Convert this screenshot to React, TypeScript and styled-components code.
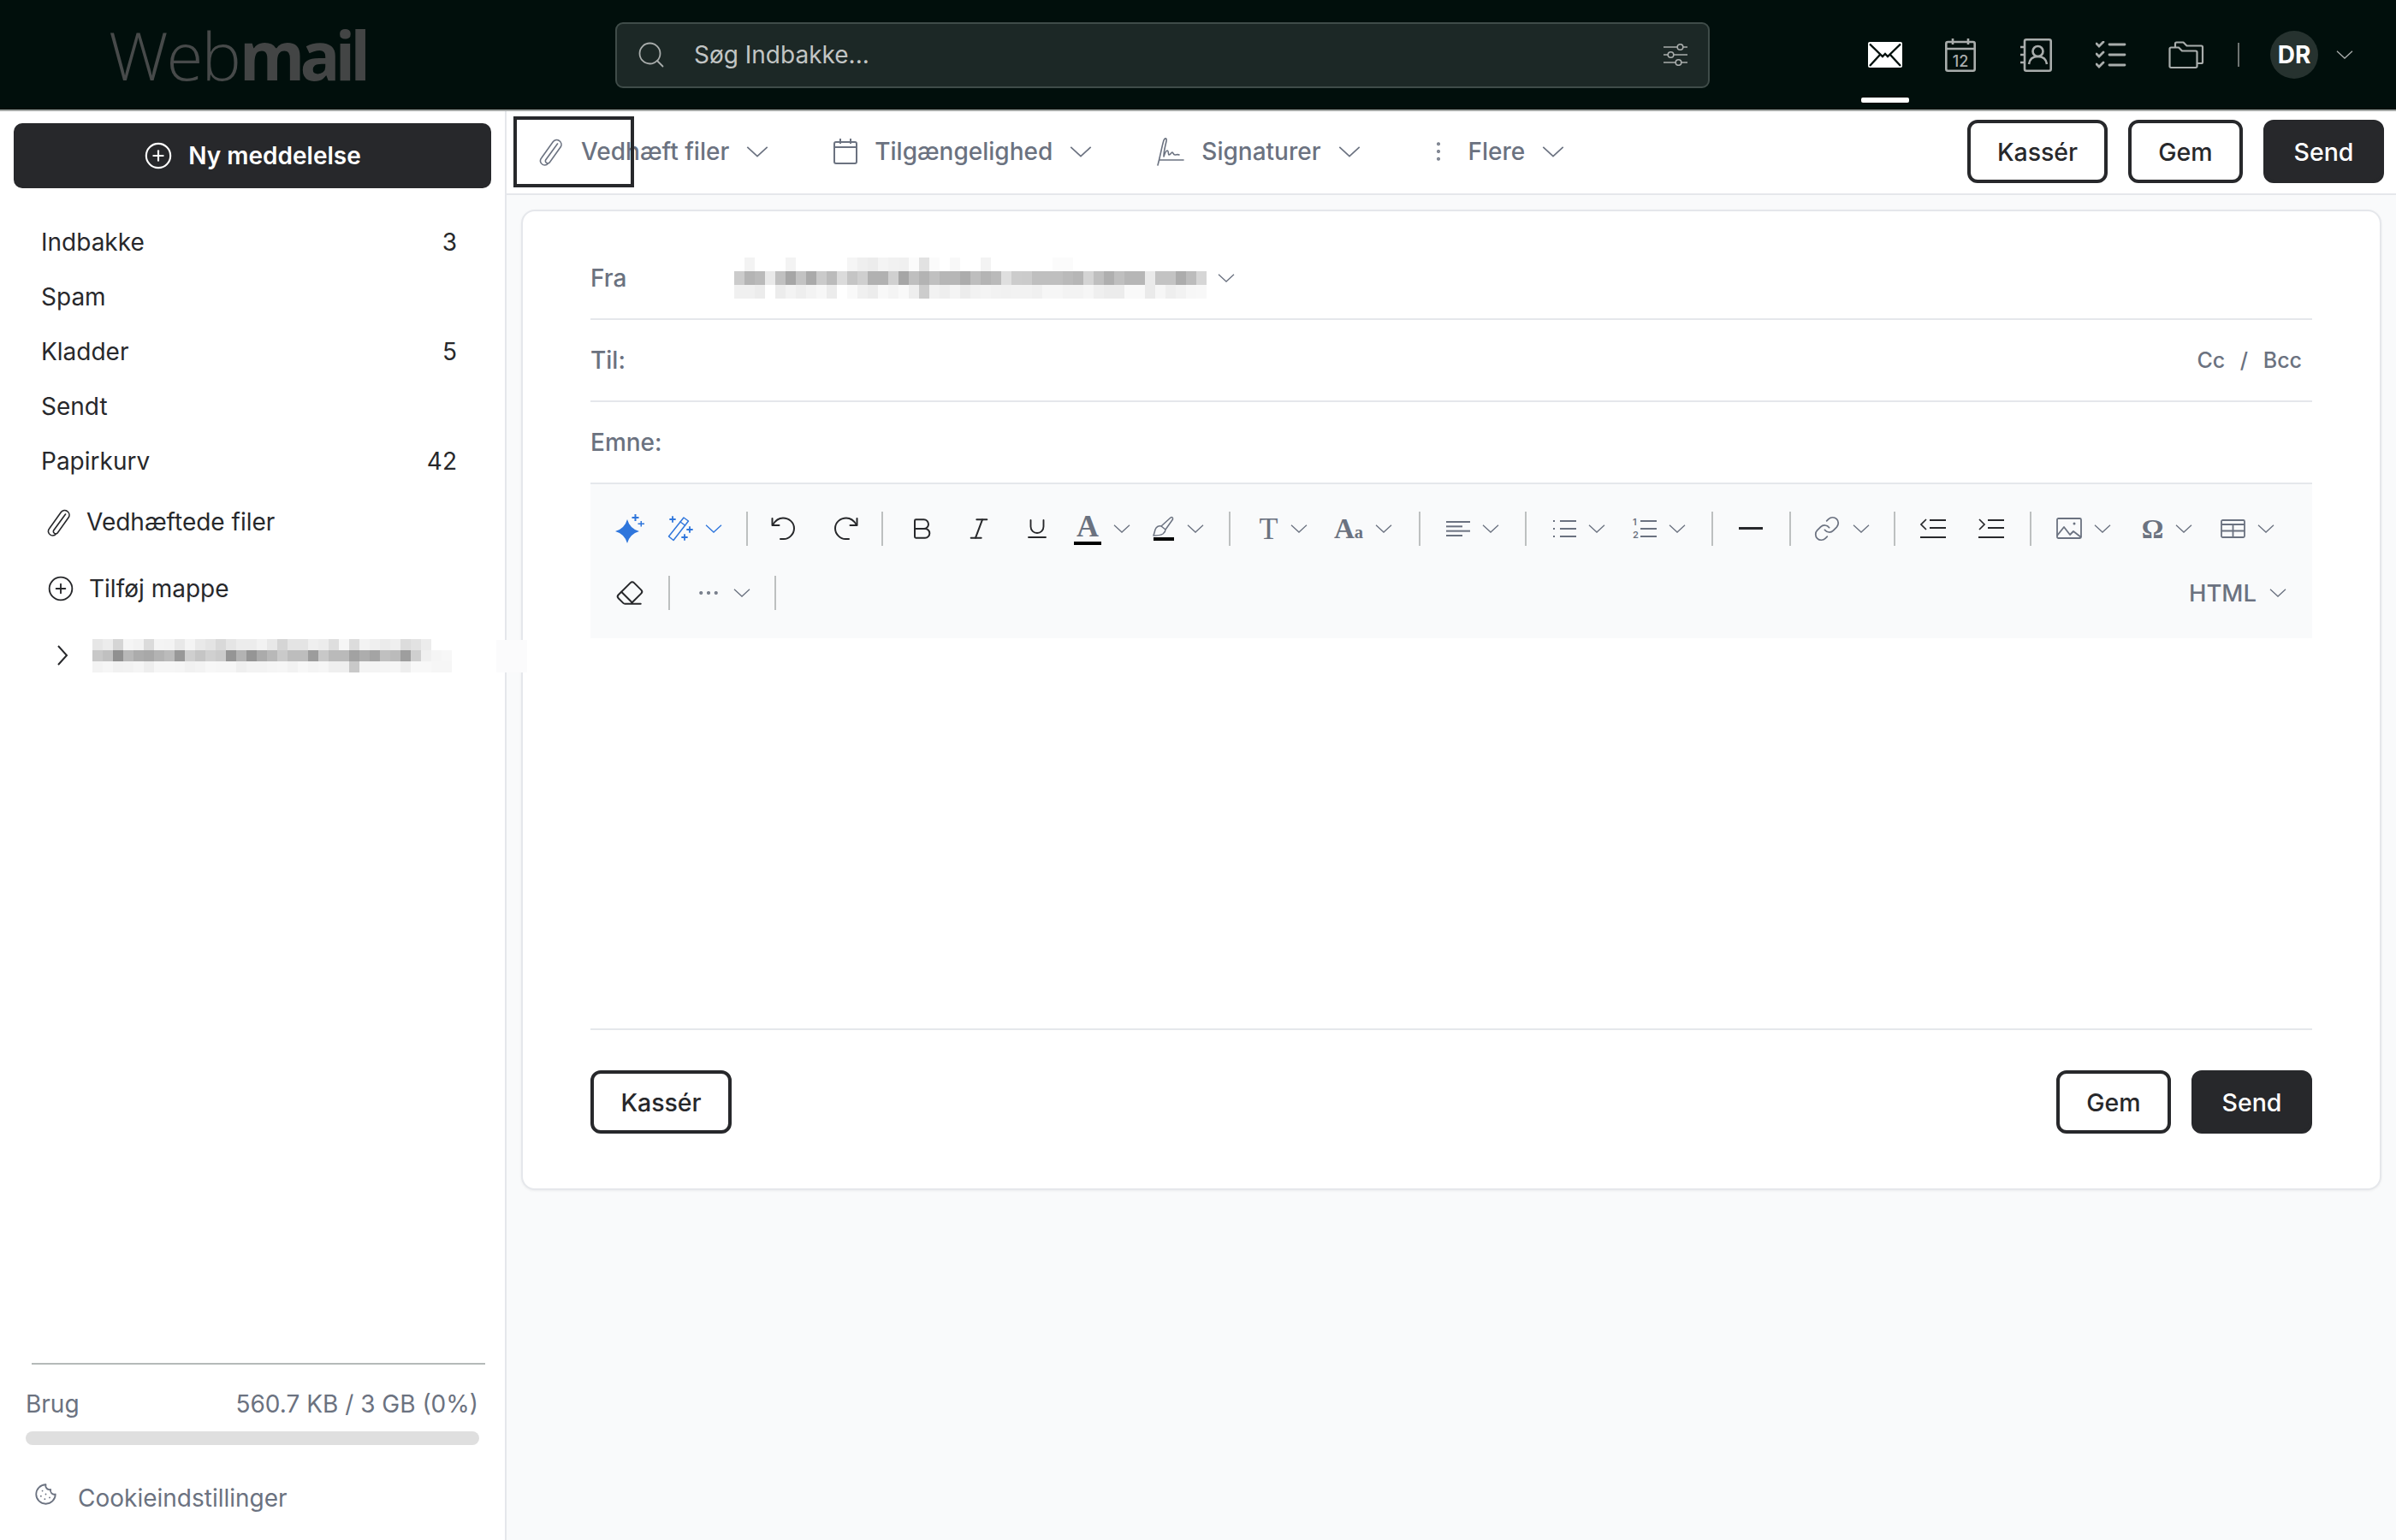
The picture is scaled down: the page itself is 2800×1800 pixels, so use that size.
import React from "react"
import styled, { createGlobalStyle } from "styled-components"
import {
  Bold,
  CirclePlus,
  Cookie,
  Ellipsis,
  EllipsisVertical,
  Eraser,
  Italic,
  Link,
  Search,
  Underline,
} from "lucide-react"

const DARK = "#27282b"
const GRAY = "#6b7280"
const LINE = "#e5e7eb"

const GlobalStyle = createGlobalStyle`
  html, body {
    margin: 0;
    padding: 0;
    background: #f9fafb;
  }
  body {
    font-family: Inter, "Liberation Sans", sans-serif;
    font-size: 28px;
    color: ${DARK};
  }
  * {
    box-sizing: border-box;
  }
`

const Page = styled.div`
  width: 2800px;
  height: 1800px;
  position: relative;
  overflow: hidden;
  display: flex;
  flex-direction: column;
`

/* top bar */
const Header = styled.header`
  height: 130px;
  flex: none;
  display: flex;
  align-items: center;
  padding: 0 50px 0 127px;
  background: #010f0c;
  border-bottom: 2px solid #a5a9a7;
`
const Logo = styled.div`
  width: 592px;
  flex: none;
  font-family: "Open Sans", sans-serif;
  font-size: 78px;
  font-weight: 300;
  letter-spacing: -2px;
  color: #474a4a;
  b {
    font-weight: 700;
    letter-spacing: -6px;
    color: #434545;
  }
`
const SearchBox = styled.div`
  width: 1279px;
  height: 77px;
  flex: none;
  display: flex;
  align-items: center;
  padding: 0 24px 0 22px;
  background: #1c2826;
  border: 2px solid #3f4c49;
  border-radius: 9px;
  color: #a9adac;
`
const SearchText = styled.span`
  flex: 1;
  margin-left: 32px;
  color: #c2c5c4;
`
const Nav = styled.nav`
  margin-left: auto;
  display: flex;
  align-items: center;
  color: #a9adac;
`
const NavItem = styled.div<{ $active?: boolean }>`
  width: 88px;
  height: 128px;
  position: relative;
  display: flex;
  align-items: center;
  justify-content: center;
  color: ${(p) => (p.$active ? "#fff" : "inherit")};
  &::after {
    content: "";
    display: ${(p) => (p.$active ? "block" : "none")};
    position: absolute;
    left: 16px;
    right: 16px;
    top: 114px;
    height: 6px;
    border-radius: 2px;
    background: #fff;
  }
`
const NavDivider = styled.div`
  width: 2px;
  height: 28px;
  margin: 0 36px 0 16px;
  background: #6e7472;
`
const Avatar = styled.div`
  width: 56px;
  height: 56px;
  border-radius: 50%;
  margin-right: 21px;
  display: flex;
  align-items: center;
  justify-content: center;
  background: #26322f;
  color: #fff;
  font-weight: 700;
  font-size: 28px;
`

const Body = styled.div`
  flex: 1;
  display: flex;
  min-height: 0;
`

/* left column */
const Sidebar = styled.aside`
  width: 592px;
  flex: none;
  display: flex;
  flex-direction: column;
  background: #fff;
  border-right: 2px solid ${LINE};
`
const NewMessage = styled.button`
  margin: 14px 16px 31px 16px;
  height: 76px;
  flex: none;
  display: flex;
  align-items: center;
  justify-content: center;
  gap: 18px;
  border: 0;
  border-radius: 10px;
  background: ${DARK};
  color: #fff;
  font: 600 28px Inter, sans-serif;
`
const FolderRow = styled.div`
  height: 64px;
  display: flex;
  align-items: center;
  justify-content: space-between;
  padding: 0 56px 0 48px;
`
const ActionRow = styled.div`
  height: 78px;
  display: flex;
  align-items: center;
  gap: 17px;
  padding-left: 55px;
`
const FolderToggle = styled.svg`
  margin: 0 11px 0 11px;
`
const SidebarFoot = styled.div`
  margin-top: auto;
  height: 207px;
  flex: none;
  color: ${GRAY};
`
const FootLine = styled.div`
  height: 2px;
  margin: 0 23px 0 37px;
  background: #b5bab9;
`
const UsageRow = styled.div`
  margin: 28px 31px 14px 30px;
  height: 36px;
  display: flex;
  align-items: center;
  justify-content: space-between;
`
const UsageBar = styled.div`
  height: 16px;
  margin: 0 30px;
  border-radius: 8px;
  background: #dfdfdf;
`
const CookieRow = styled.div`
  margin-top: 42px;
  height: 40px;
  display: flex;
  align-items: center;
  gap: 24px;
  padding-left: 40px;
  svg {
    position: relative;
    top: -5px;
  }
`

/* right column */
const Main = styled.main`
  flex: 1;
  min-width: 0;
  display: flex;
  flex-direction: column;
`
const ActionBar = styled.div`
  height: 98px;
  flex: none;
  display: flex;
  align-items: center;
  padding: 0 14px 2px 0;
  background: #fff;
  border-bottom: 2px solid ${LINE};
`
const ActionItem = styled.div`
  display: flex;
  align-items: center;
  gap: 20px;
  padding: 0 38px;
  color: ${GRAY};
  font-weight: 500;
`
const ActionButtons = styled.div`
  margin-left: auto;
  display: flex;
  gap: 24px;
`
const Btn = styled.button<{ $primary?: boolean; $w: number }>`
  width: ${(p) => p.$w}px;
  height: 74px;
  border-radius: 12px;
  border: 4px solid ${DARK};
  background: ${(p) => (p.$primary ? DARK : "#fff")};
  color: ${(p) => (p.$primary ? "#fff" : DARK)};
  font: 500 28.5px Inter, sans-serif;
  padding: 0;
`
const FocusRing = styled.div`
  position: absolute;
  left: 600px;
  top: 136px;
  width: 141px;
  height: 83px;
  border: 4px solid ${DARK};
  pointer-events: none;
`
const Content = styled.div`
  flex: 1;
  padding: 17px 17px 0;
  background: #f9fafb;
`
const Card = styled.section`
  height: 1146px;
  display: flex;
  flex-direction: column;
  padding: 31px 79px 0;
  background: #fff;
  border: 2px solid ${LINE};
  border-radius: 16px;
  box-shadow: 0 1px 3px rgba(0, 0, 0, 0.06);
`
const FieldRow = styled.div`
  height: 96px;
  flex: none;
  display: flex;
  align-items: center;
  border-bottom: 2px solid ${LINE};
  color: ${GRAY};
  font-weight: 500;
`
const FromLabel = styled.span`
  width: 168px;
  flex: none;
`
const FromValue = styled.div`
  display: flex;
  align-items: center;
  gap: 13px;
`
const CopyLinks = styled.span`
  margin-left: auto;
  margin-right: 12px;
  font-size: 25px;
  word-spacing: 11px;
`

/* editor toolbar */
const EditorBar = styled.div`
  flex: none;
  padding: 14px 0 16px;
  background: #f9fafb;
`
const EditorRow = styled.div`
  height: 75px;
  display: flex;
  align-items: center;
`
const ToolGroup = styled.div<{ $l: number; $r: number }>`
  display: flex;
  align-items: center;
  padding: 0 ${(p) => p.$r}px 0 ${(p) => p.$l}px;
`
const Divider = styled.div`
  width: 2px;
  height: 40px;
  flex: none;
  background: #bdc0c0;
`
const Tool = styled.div<{ $w: number; $color?: string }>`
  width: ${(p) => p.$w}px;
  display: flex;
  align-items: center;
  justify-content: center;
  gap: 14px;
  color: ${(p) => p.$color || GRAY};
`
const Glyph = styled.span<{ $size: number; $bold?: boolean }>`
  font-family: "Liberation Serif", serif;
  font-size: ${(p) => p.$size}px;
  font-weight: ${(p) => (p.$bold ? 700 : 400)};
  line-height: 34px;
  height: 34px;
  small {
    font-size: 0.62em;
  }
`
const ColorMark = styled.span`
  display: flex;
  flex-direction: column;
  align-items: center;
`
const ColorBar = styled.i<{ $w: number }>`
  display: block;
  width: ${(p) => p.$w}px;
  height: 4px;
  margin-top: 1px;
  background: #000;
`
const RuleIcon = styled.i`
  display: block;
  width: 28px;
  height: 3px;
  background: ${DARK};
`
const HtmlSwitch = styled.div`
  margin-left: auto;
  margin-right: 30px;
  display: flex;
  align-items: center;
  gap: 15px;
  color: ${GRAY};
  font-size: 27.5px;
  font-weight: 500;
`
const EditorArea = styled.div`
  flex: none;
  height: 458px;
  border-bottom: 2px solid ${LINE};
`
const CardFoot = styled.div`
  flex: none;
  display: flex;
  gap: 24px;
  margin-top: 47px;
`
const Spacer = styled.div`
  flex: 1;
`
const Smudge = styled.div`
  position: absolute;
  left: 580px;
  top: 748px;
  width: 36px;
  height: 38px;
  background: #fbfbfc;
`
const ClipSvg = styled.svg`
  margin: 0 -2px 0 -4px;
  flex: none;
`

const Chevron = ({ w = 20, h = 10 }: { w?: number; h?: number }) => (
  <svg width={w} height={h} viewBox="0 0 20 10" fill="none" stroke="currentColor" strokeWidth="1.3">
    <path d="M1 .7l9 8.300 9-8.300" />
  </svg>
)

const Mosaic = ({ rows, cw, ch }: { rows: string[]; cw: number; ch: number }) => {
  const cols = Math.max(...rows.map((r) => r.split(" ").length))
  return (
    <svg width={cols * cw} height={rows.length * ch} viewBox={`0 0 ${cols * cw} ${rows.length * ch}`} shapeRendering="crispEdges">
      {rows.map((r, y) =>
        r.split(" ").map((g, x) => (
          <rect key={`${x}-${y}`} x={x * cw} y={y * ch} width={cw} height={ch} fill={`#${g}${g}${g}`} />
        ))
      )}
    </svg>
  )
}

const Clip = () => (
  <ClipSvg width="35" height="35" viewBox="0 0 24 24" fill="none" stroke="currentColor" strokeWidth="1.100" strokeLinecap="round">
    <path d="M17.500 5.500L8 18.500a1.900 1.900 0 0 0 3 2.200l9-12.600a3.700 3.700 0 0 0-6-4.300L4.600 17a3.300 3.300 0 0 0 1 5.200 3.600 3.600 0 0 0 4.400-1" />
  </ClipSvg>
)
const SliderIcon = () => (
  <svg width="28" height="26" viewBox="0 0 28 26" fill="none" stroke="currentColor" strokeWidth="1.600">
    <path d="M0 4h16M23 4h5M0 13h5M12 13h16M0 22h14M21 22h7" />
    <circle cx="19.500" cy="4" r="3.300" />
    <circle cx="8.500" cy="13" r="3.300" />
    <circle cx="17.500" cy="22" r="3.300" />
  </svg>
)
const CalendarPlain = () => (
  <svg width="28" height="30" viewBox="0 0 28 30" fill="none" stroke="currentColor" strokeWidth="2">
    <rect x="1" y="4" width="26" height="25" rx="2" />
    <path d="M1 10h26M8 0v6M20 0v6" />
  </svg>
)
const SignatureIcon = () => (
  <svg width="32" height="34" viewBox="0 0 32 34" fill="none" stroke="currentColor" strokeWidth="1.600" strokeLinecap="round" strokeLinejoin="round">
    <path d="M1 33C4 22 6 10 8 4c1-3 4-3 3 1-1 5-3 11-3 18 1-3 3-7 4-7 2 0 1 5 2 5 2 0 3-3 4-3s1 3 3 3 3-1 5 0" />
    <path d="M3 27h28" />
  </svg>
)
const MailNav = () => (
  <svg width="40" height="30" viewBox="0 0 40 30">
    <rect width="40" height="30" rx="2" fill="#fff" />
    <path d="M2 2.500L17 17l3-3 3 3L38 2.500M2 28l12-13M38 28L26 15" fill="none" stroke="#010f0c" strokeWidth="2.400" />
  </svg>
)
const CalendarNav = () => (
  <svg width="36" height="39" viewBox="0 0 36 39" fill="none" stroke="currentColor" strokeWidth="2.600">
    <rect x="1.300" y="4" width="33.400" height="33.700" rx="2" />
    <path d="M1 12h34M9 0v7M27 0v7" />
    <text x="18" y="33" textAnchor="middle" fontFamily="Inter, sans-serif" fontSize="18" fontWeight="500" fill="currentColor" stroke="none">12</text>
  </svg>
)
const ContactNav = () => (
  <svg width="37" height="39" viewBox="0 0 37 39" fill="none" stroke="currentColor" strokeWidth="2.600">
    <rect x="5" y="1.300" width="30.700" height="36.400" rx="2" />
    <circle cx="20.500" cy="15" r="6" />
    <path d="M10 30c1-7 6-9 10.500-9S30 23 31 30M0 10h5M0 19h5M0 28h5" />
  </svg>
)
const ChecksNav = () => (
  <svg width="36" height="32" viewBox="0 0 36 32" fill="none" stroke="currentColor" strokeWidth="2.800" strokeLinecap="round">
    <path d="M1 3l3 3 5-5M1 15l3 3 5-5M1 27l3 3 5-5M16 4h18M16 16h18M16 28h18" />
  </svg>
)
const FoldersNav = () => (
  <svg width="42" height="33" viewBox="0 0 42 33" fill="none" stroke="currentColor" strokeWidth="2.200" strokeLinejoin="round">
    <path d="M1.500 9A1.500 1.500 0 0 1 3 7.500h9l4 4h16a1.500 1.500 0 0 1 1.500 1.500v16.500A1.500 1.500 0 0 1 32 31H3a1.500 1.500 0 0 1-1.500-1.500z" />
    <path d="M8 7V3a1.500 1.500 0 0 1 1.500-1.500h8l4 4h17A1.500 1.500 0 0 1 40 7v17.500a1.500 1.500 0 0 1-1.500 1.500H34" />
  </svg>
)
const Sparkle = () => (
  <svg width="34" height="34" viewBox="0 0 34 34" fill="currentColor">
    <path d="M14 6Q17 17 28 20 17 23 14 34 11 23 0 20 11 17 14 6z" />
    <path d="M22.500 0h2v3h3v2h-3v3h-2V5h-3V3h3zM29.500 8h1.500v2.500H34V12h-3v2.500h-1.500V12h-3v-1.500h3z" />
  </svg>
)
const Wand = () => (
  <svg width="30" height="30" viewBox="0 0 30 30" fill="none" stroke="currentColor" strokeWidth="1.500" strokeLinecap="round">
    <path d="M1.500 24L19 2l5.500 4L7 28.500z" strokeLinejoin="round" />
    <path d="M15 7l5.500 4" />
    <path d="M6 1v6M3 4h6M26 13v6M23 16h6M20 22v6M17 25h6" strokeWidth="1.800" />
  </svg>
)
const UndoIcon = ({ flip }: { flip?: boolean }) => (
  <svg width="30" height="30" viewBox="0 0 30 30" fill="none" stroke="#27282b" strokeWidth="2" strokeLinecap="round" strokeLinejoin="round" transform={flip ? "scale(-1 1)" : undefined}>
    <path d="M1.500 3v8h8" />
    <path d="M2 10.500C5 5.500 9 2.500 14 2.500c7 0 13 5 13 12s-6 12.500-12 12.500h-4" />
  </svg>
)
const BrushIcon = () => (
  <svg width="26" height="24" viewBox="0 0 26 24" fill="none" stroke="currentColor" strokeWidth="1.500" strokeLinejoin="round">
    <path d="M10 12c-3-1-6 1-7 4-.5 2-1 4-2 7 3 0 8 0 11-2 2-1.500 3-3 3-5z" />
    <path d="M10 12L21 2c1.500-1 3 0 2.500 2L15 16" />
  </svg>
)
const LinesIcon = ({ widths }: { widths: number[] }) => (
  <svg width="28" height="18" viewBox="0 0 28 18" fill="none" stroke={GRAY} strokeWidth="2">
    {widths.map((w, i) => (
      <path key={i} d={`M0 ${1 + (i * 16) / (widths.length - 1)}h${w}`} />
    ))}
  </svg>
)
const ListIcon = ({ numbered }: { numbered?: boolean }) => (
  <svg width="28" height="30" viewBox="0 0 28 30" fill="none" stroke={GRAY} strokeWidth="2">
    <path d="M9 6h19M9 15h19M9 24h19" />
    {numbered ? (
      <g fill={GRAY} stroke="none" fontFamily="Inter, sans-serif" fontSize="11" fontWeight="600">
        <text x="0" y="11">1</text>
        <text x="0" y="26">2</text>
      </g>
    ) : (
      <path d="M1 6h3M1 15h3M1 24h3" strokeDasharray="2 1" />
    )}
  </svg>
)
const IndentIcon = ({ out }: { out?: boolean }) => (
  <svg width="30" height="24" viewBox="0 0 30 24" fill="none" stroke={DARK} strokeWidth="2">
    <path d="M11 2h19M11 11h19M0 22h30" />
    <path d={out ? "M7 1L1 7l6 6" : "M1 1l6 6-6 6"} strokeWidth="1.700" />
  </svg>
)
const ImageIcon = () => (
  <svg width="30" height="25" viewBox="0 0 30 25" fill="none" stroke={GRAY} strokeWidth="1.800" strokeLinejoin="round">
    <rect x="1" y="1" width="28" height="23" rx="1.500" />
    <path d="M1 21l8-10 7 9 4-4 9 7" />
    <circle cx="21" cy="7" r="1.500" fill={GRAY} stroke="none" />
  </svg>
)
const TableIcon = () => (
  <svg width="29" height="22" viewBox="0 0 29 22" fill="none" stroke={GRAY} strokeWidth="1.800">
    <rect x="1" y="1" width="27" height="20" rx="1.500" />
    <path d="M1 6h27M1 13.500h27M14.500 6v15" />
  </svg>
)

const FROM_ROWS = [
  "ff f3 ff ff ff f3 ff ff ff ff ff f5 ef ec f4 f1 f0 fb e2 fb ff f8 ff ff f3 ff ff ff ff ff ff fb fb ff ff ff ff ff ff ff ff ff ff ff ff ff",
  "cb b4 ba e9 c0 a6 c3 aa ca bb db c5 cf b1 b1 d0 a6 bf b3 c0 b6 b6 ac be b4 ba df cc cb bf bf bf ba b6 d4 bf af bf b6 b6 ea c3 c3 ac bc d6",
  "f0 f0 ec ff ec f3 ee f3 f7 ec ff f9 f0 ec f8 f4 f9 ee cc f2 ee f4 ec f2 f4 f2 f1 f2 f2 f0 f6 f6 f3 f3 f6 ef ec ec f9 f9 ea f6 ee f2 f7 f8",
]
const FOLDER_ROWS = [
  "e6 ec d5 f5 f2 db f4 f3 e8 f4 e9 e4 d9 e5 ec ec f2 e8 d5 e4 e4 ef ec de f6 dc f3 ef eb ef dc e2 ec ff ff",
  "c8 c0 90 b8 ac a8 b3 bb 98 cf c5 d0 cb 95 b3 95 ab b8 ca bd bd 9c c8 ba ba a2 ad a4 c0 bb 9e cf f0 f5 f7",
  "f3 f6 f1 f2 f5 ee f6 f6 f5 f1 f3 f7 f6 f6 ef f3 f3 f5 f6 f2 f7 f4 f6 ef ef c9 f4 f4 f5 f6 ee f8 f8 f6 f6",
]

const FOLDERS: [string, number?][] = [["Indbakke", 3], ["Spam"], ["Kladder", 5], ["Sendt"], ["Papirkurv", 42]]

export default function App() {
  return (
    <Page>
      <GlobalStyle />
      <Header>
        <Logo>
          Web<b>mail</b>
        </Logo>
        <SearchBox>
          <Search size={36} strokeWidth={1.2} />
          <SearchText>Søg Indbakke...</SearchText>
          <SliderIcon />
        </SearchBox>
        <Nav>
          <NavItem $active>
            <MailNav />
          </NavItem>
          <NavItem>
            <CalendarNav />
          </NavItem>
          <NavItem>
            <ContactNav />
          </NavItem>
          <NavItem>
            <ChecksNav />
          </NavItem>
          <NavItem>
            <FoldersNav />
          </NavItem>
          <NavDivider />
          <Avatar>DR</Avatar>
          <Chevron w={20} h={10} />
        </Nav>
      </Header>
      <Body>
        <Sidebar>
          <NewMessage>
            <CirclePlus size={34} strokeWidth={1.5} />
            Ny meddelelse
          </NewMessage>
          {FOLDERS.map(([name, count]) => (
            <FolderRow key={name}>
              <span>{name}</span>
              {count !== undefined && <span>{count}</span>}
            </FolderRow>
          ))}
          <ActionRow>
            <Clip />
            Vedhæftede filer
          </ActionRow>
          <ActionRow>
            <CirclePlus size={32} strokeWidth={1.4} />
            Tilføj mappe
          </ActionRow>
          <ActionRow>
            <FolderToggle width="14" height="24" viewBox="0 0 14 24" fill="none" stroke="currentColor" strokeWidth="2">
              <path d="M2 1l10 11L2 23" />
            </FolderToggle>
            <Mosaic rows={FOLDER_ROWS} cw={12} ch={13} />
          </ActionRow>
          <SidebarFoot>
            <FootLine />
            <UsageRow>
              <span>Brug</span>
              <span>560.7 KB / 3 GB (0%)</span>
            </UsageRow>
            <UsageBar />
            <CookieRow>
              <Cookie size={27} strokeWidth={1.6} />
              Cookieindstillinger
            </CookieRow>
          </SidebarFoot>
        </Sidebar>
        <Main>
          <ActionBar>
            <ActionItem>
              <Clip />
              Vedhæft filer
              <Chevron w={26} h={13} />
            </ActionItem>
            <ActionItem>
              <CalendarPlain />
              Tilgængelighed
              <Chevron w={26} h={13} />
            </ActionItem>
            <ActionItem>
              <SignatureIcon />
              Signaturer
              <Chevron w={26} h={13} />
            </ActionItem>
            <ActionItem>
              <EllipsisVertical size={30} strokeWidth={1.2} />
              Flere
              <Chevron w={26} h={13} />
            </ActionItem>
            <ActionButtons>
              <Btn $w={164}>Kassér</Btn>
              <Btn $w={134}>Gem</Btn>
              <Btn $w={141} $primary>
                Send
              </Btn>
            </ActionButtons>
          </ActionBar>
          <Content>
            <Card>
              <FieldRow>
                <FromLabel>Fra</FromLabel>
                <FromValue>
                  <Mosaic rows={FROM_ROWS} cw={12} ch={16} />
                  <Chevron />
                </FromValue>
              </FieldRow>
              <FieldRow>
                <span>Til:</span>
                <CopyLinks>Cc / Bcc</CopyLinks>
              </FieldRow>
              <FieldRow>Emne:</FieldRow>
              <EditorBar>
                <EditorRow>
                  <ToolGroup $l={12} $r={19}>
                    <Tool $w={68} $color="#2f76dc">
                      <Sparkle />
                    </Tool>
                    <Tool $w={83} $color="#2f76dc">
                      <Wand />
                      <Chevron />
                    </Tool>
                  </ToolGroup>
                  <Divider />
                  <ToolGroup $l={6} $r={6}>
                    <Tool $w={72}>
                      <UndoIcon />
                    </Tool>
                    <Tool $w={72}>
                      <UndoIcon flip />
                    </Tool>
                  </ToolGroup>
                  <Divider />
                  <ToolGroup $l={12} $r={12}>
                    <Tool $w={66} $color={DARK}>
                      <Bold size={32} strokeWidth={1.5} />
                    </Tool>
                    <Tool $w={68} $color={DARK}>
                      <Italic size={32} strokeWidth={1.5} />
                    </Tool>
                    <Tool $w={68} $color={DARK}>
                      <Underline size={30} strokeWidth={1.5} />
                    </Tool>
                    <Tool $w={84}>
                      <ColorMark>
                        <Glyph $size={36} $bold>
                          A
                        </Glyph>
                        <ColorBar $w={32} />
                      </ColorMark>
                      <Chevron />
                    </Tool>
                    <Tool $w={94}>
                      <ColorMark>
                        <BrushIcon />
                        <ColorBar $w={24} />
                      </ColorMark>
                      <Chevron />
                    </Tool>
                  </ToolGroup>
                  <Divider />
                  <ToolGroup $l={20} $r={13}>
                    <Tool $w={83}>
                      <Glyph $size={36}>T</Glyph>
                      <Chevron />
                    </Tool>
                    <Tool $w={104}>
                      <Glyph $size={33} $bold>
                        A<small>a</small>
                      </Glyph>
                      <Chevron />
                    </Tool>
                  </ToolGroup>
                  <Divider />
                  <ToolGroup $l={20} $r={20}>
                    <Tool $w={82}>
                      <LinesIcon widths={[28, 19, 28, 19]} />
                      <Chevron />
                    </Tool>
                  </ToolGroup>
                  <Divider />
                  <ToolGroup $l={19} $r={9}>
                    <Tool $w={84}>
                      <ListIcon />
                      <Chevron />
                    </Tool>
                    <Tool $w={104}>
                      <ListIcon numbered />
                      <Chevron />
                    </Tool>
                  </ToolGroup>
                  <Divider />
                  <ToolGroup $l={10} $r={11}>
                    <Tool $w={68}>
                      <RuleIcon />
                    </Tool>
                  </ToolGroup>
                  <Divider />
                  <ToolGroup $l={17} $r={19}>
                    <Tool $w={84}>
                      <Link size={32} strokeWidth={1.3} />
                      <Chevron />
                    </Tool>
                  </ToolGroup>
                  <Divider />
                  <ToolGroup $l={10} $r={11}>
                    <Tool $w={68}>
                      <IndentIcon out />
                    </Tool>
                    <Tool $w={68}>
                      <IndentIcon />
                    </Tool>
                  </ToolGroup>
                  <Divider />
                  <ToolGroup $l={18} $r={0}>
                    <Tool $w={85}>
                      <ImageIcon />
                      <Chevron />
                    </Tool>
                    <Tool $w={111}>
                      <Glyph $size={32} $bold>
                        Ω
                      </Glyph>
                      <Chevron />
                    </Tool>
                    <Tool $w={76}>
                      <TableIcon />
                      <Chevron />
                    </Tool>
                  </ToolGroup>
                </EditorRow>
                <EditorRow>
                  <ToolGroup $l={12} $r={11}>
                    <Tool $w={68} $color={DARK}>
                      <Eraser size={34} strokeWidth={1.4} />
                    </Tool>
                  </ToolGroup>
                  <Divider />
                  <ToolGroup $l={19} $r={18}>
                    <Tool $w={85}>
                      <Ellipsis size={30} strokeWidth={1.3} />
                      <Chevron />
                    </Tool>
                  </ToolGroup>
                  <Divider />
                  <HtmlSwitch>
                    HTML
                    <Chevron />
                  </HtmlSwitch>
                </EditorRow>
              </EditorBar>
              <EditorArea />
              <CardFoot>
                <Btn $w={165}>Kassér</Btn>
                <Spacer />
                <Btn $w={134}>Gem</Btn>
                <Btn $w={141} $primary>
                  Send
                </Btn>
              </CardFoot>
            </Card>
          </Content>
        </Main>
      </Body>
      <FocusRing />
      <Smudge />
    </Page>
  )
}
